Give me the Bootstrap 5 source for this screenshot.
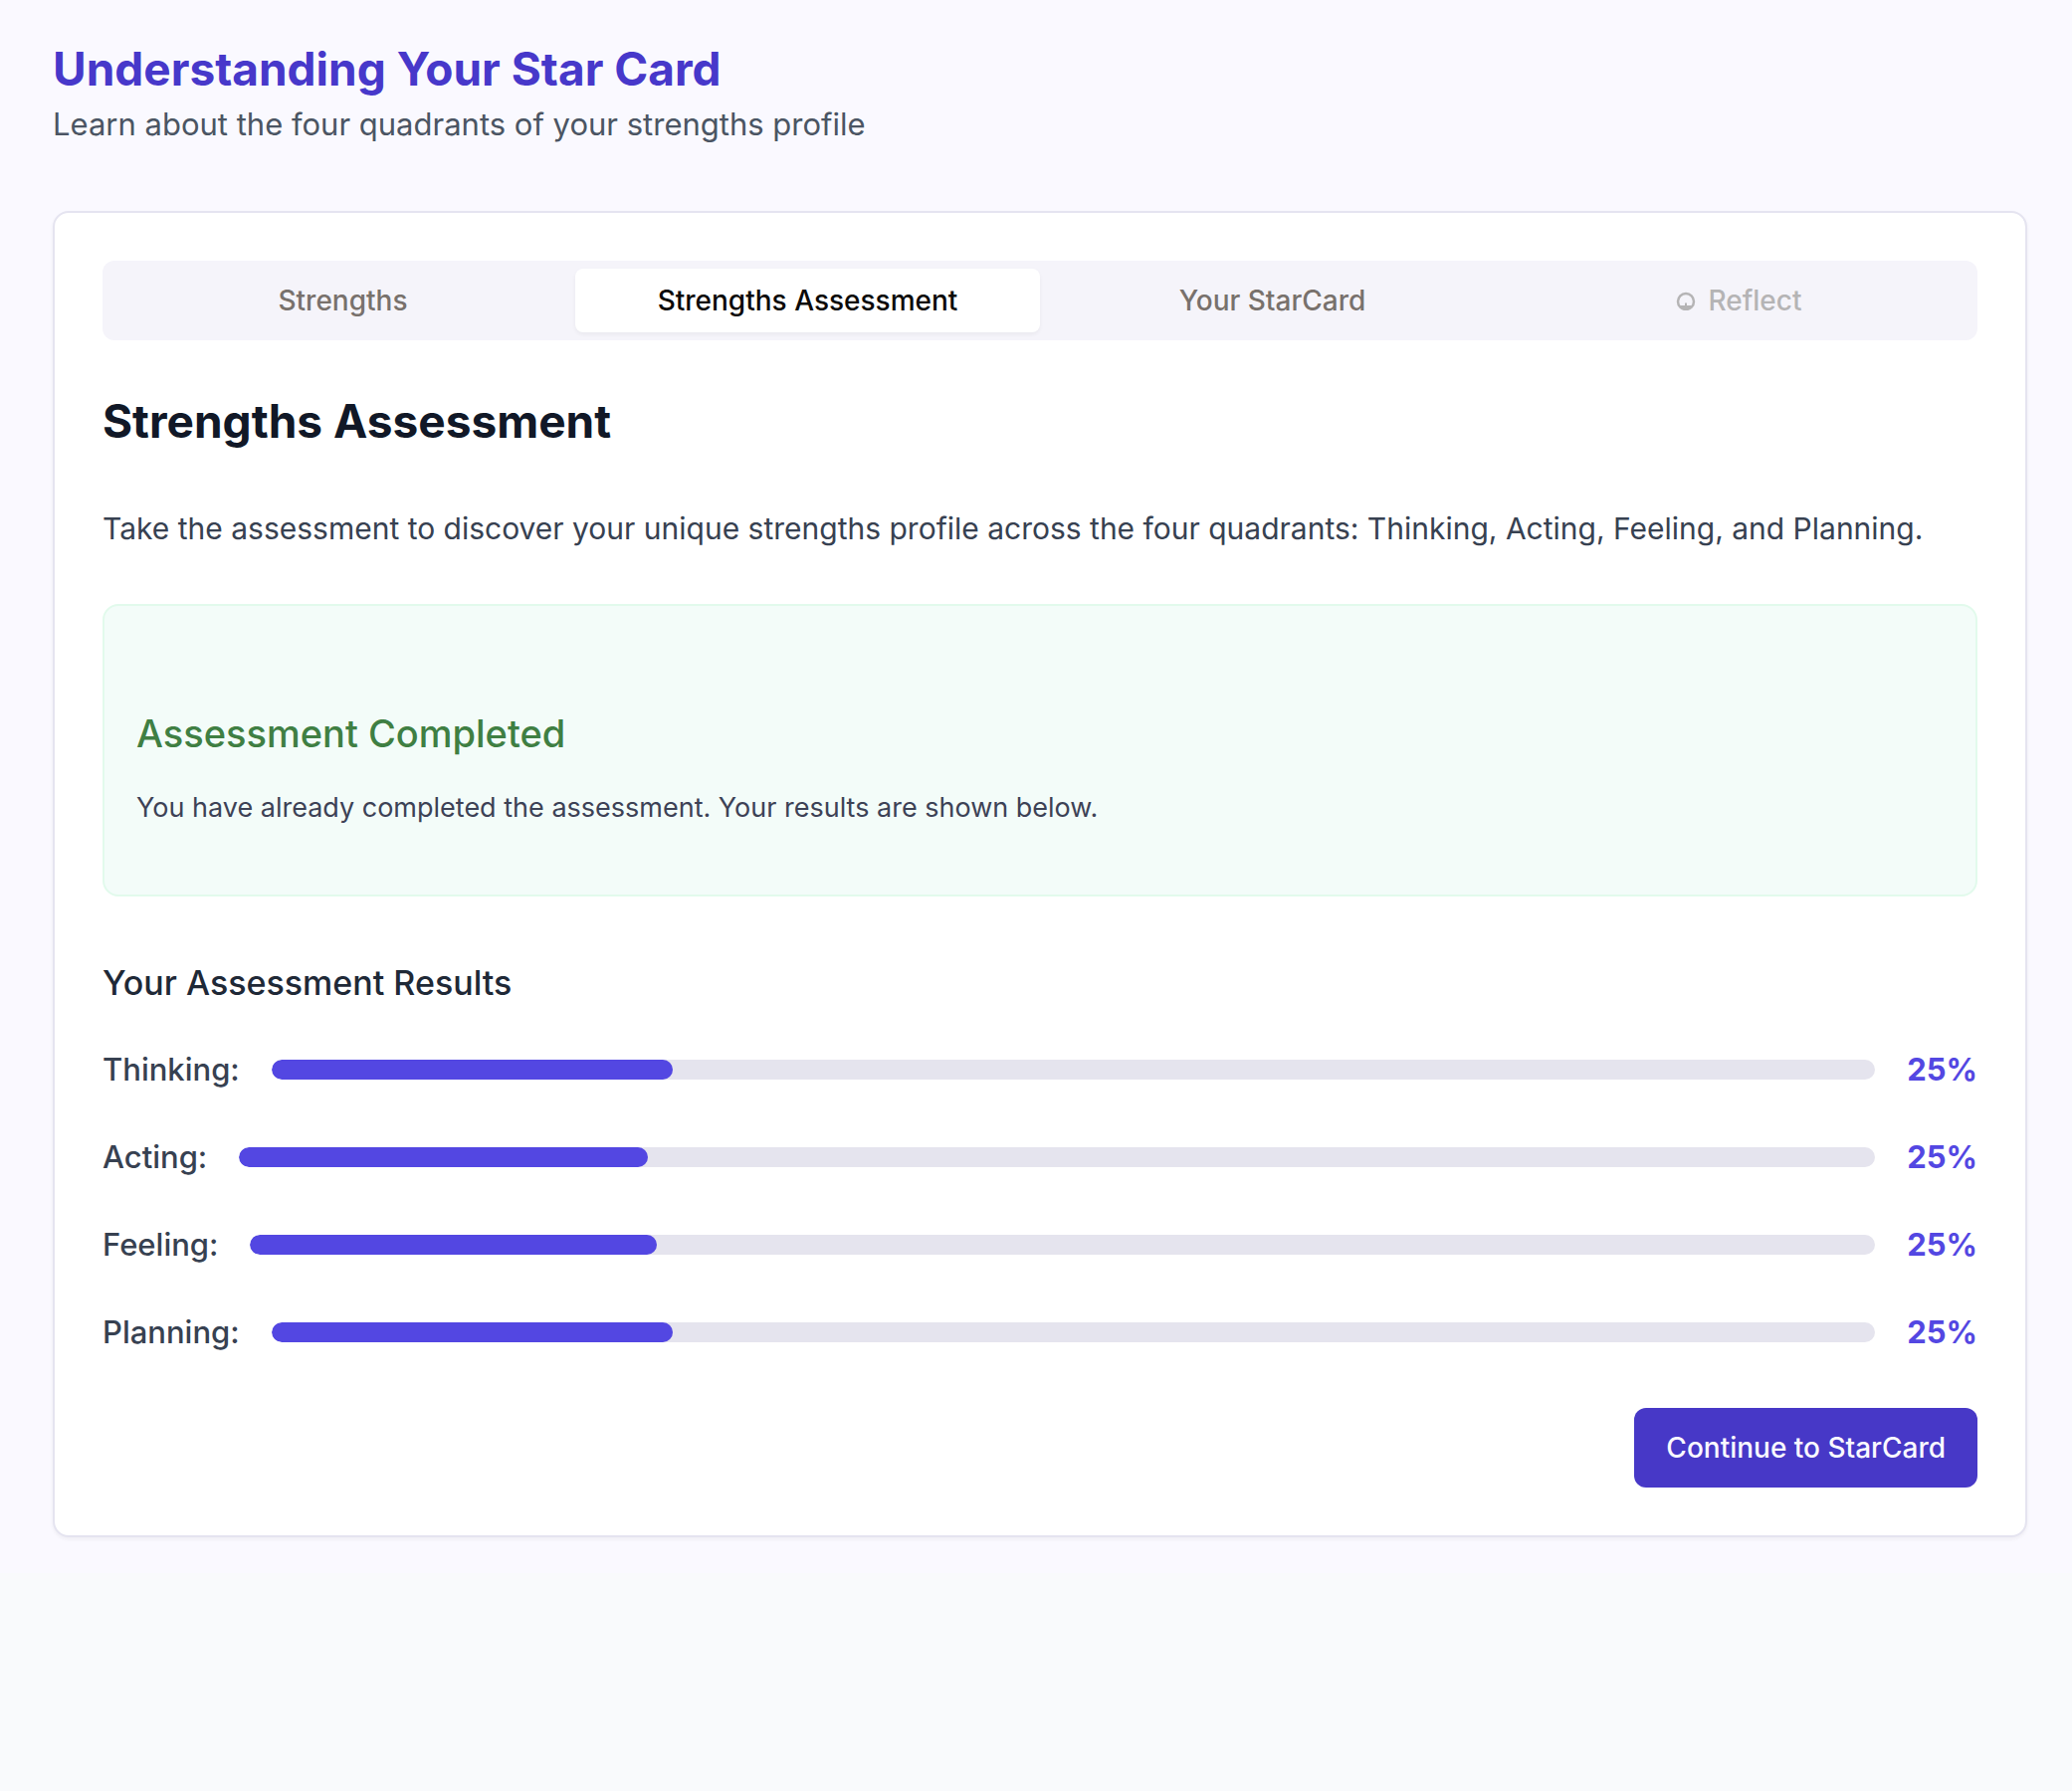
<!DOCTYPE html>
<html lang="en">
<head>
<meta charset="utf-8">
<meta name="viewport" content="width=device-width, initial-scale=1">
<title>Understanding Your Star Card</title>
<link href="https://cdn.jsdelivr.net/npm/bootstrap@5.3.0/dist/css/bootstrap.min.css" rel="stylesheet">
<style>
body{font-family:Inter,"Liberation Sans",sans-serif;font-size:31px;line-height:56px;color:#374151;background:#f9fafc}
.page{background:#faf9ff;padding:40px 45px 36px 53px}
.page-head{margin-bottom:60px}
.page-title{font-size:46px;line-height:58px;font-weight:700;color:#4738ca}
.page-sub{color:#4b5563;line-height:54px}
.panel{border:2px solid #e5e4f0;border-radius:16px;padding:48px;box-shadow:0 2px 4px rgba(0,0,0,.05)}
.tabs{background:#f5f4fa;border-radius:12px;padding:8px}
.tabs .nav-link{font-size:28px;line-height:40px;padding:12px 24px;border:0;background:transparent;font-weight:500;color:#78716c;border-radius:8px}
.tabs .nav-link.active{background:#fff;color:#0c0a09;box-shadow:0 2px 4px rgba(0,0,0,.05)}
.tabs .nav-link:disabled{color:#b5b4b5;gap:12px}
.section-title{font-size:46px;line-height:66px;font-weight:700;color:#111827}
.intro{font-size:30px;line-height:55px}
.done{background:#f3fcf9;border:2px solid #e2faec;border-radius:16px;padding:100px 32px 64px}
.done-title{font-size:38px;line-height:56px;font-weight:500;color:#3f7f43}
.done-text{font-size:27px;line-height:46px;color:#3d4256}
.results-title{font-size:34px;line-height:62px;font-weight:500;color:#1f2937;margin:56px 0 28px}
.scores,.score{gap:32px}
.score{font-weight:500}
.score .progress{height:20px;border-radius:10px;background:#e5e4ee}
.score .progress-bar{border-radius:10px;background:#5347e2}
.score strong{font-weight:700;color:#5347e2}
.btn-go{--bs-btn-color:#faf9ff;--bs-btn-bg:#4738c7;--bs-btn-hover-color:#fff;--bs-btn-hover-bg:#3c2fb0;font-size:28px;line-height:40px;font-weight:500;padding:20px 32px;border:0;border-radius:12px}
</style>
</head>
<body>
<div class="page">
  <header class="page-head">
    <h1 class="page-title mb-0">Understanding Your Star Card</h1>
    <p class="page-sub mb-0">Learn about the four quadrants of your strengths profile</p>
  </header>
  <main class="card panel">
    <div class="nav nav-justified tabs" role="tablist">
      <button class="nav-link" type="button" role="tab" aria-selected="false">Strengths</button>
      <button class="nav-link active" type="button" role="tab" aria-selected="true">Strengths Assessment</button>
      <button class="nav-link" type="button" role="tab" aria-selected="false">Your StarCard</button>
      <button class="nav-link d-flex align-items-center justify-content-center" type="button" role="tab" aria-selected="false" disabled>
        <svg class="ms-1" width="20" height="20" viewBox="0 0 20 20" aria-hidden="true"><circle cx="10" cy="11" r="8" fill="none" stroke="currentColor" stroke-width="2.5"/><path d="M4 15H9v-2.500h2V15h5L14 18H6z" fill="currentColor"/></svg>
        <span>Reflect</span>
      </button>
    </div>
    <h2 class="section-title my-5">Strengths Assessment</h2>
    <p class="intro mb-5">Take the assessment to discover your unique strengths profile across the four quadrants: Thinking, Acting, Feeling, and Planning.</p>
    <section class="done">
      <h3 class="done-title mb-4">Assessment Completed</h3>
      <p class="done-text mb-0">You have already completed the assessment. Your results are shown below.</p>
    </section>
    <h3 class="results-title">Your Assessment Results</h3>
    <div class="scores d-flex flex-column mb-5">
      <div class="score d-flex align-items-center">
        <span id="thinking">Thinking:</span>
        <div class="progress flex-grow-1" role="progressbar" aria-labelledby="thinking" aria-valuenow="25" aria-valuemin="0" aria-valuemax="100"><div class="progress-bar" style="width:25%"></div></div>
        <strong>25%</strong>
      </div>
      <div class="score d-flex align-items-center">
        <span id="acting">Acting:</span>
        <div class="progress flex-grow-1" role="progressbar" aria-labelledby="acting" aria-valuenow="25" aria-valuemin="0" aria-valuemax="100"><div class="progress-bar" style="width:25%"></div></div>
        <strong>25%</strong>
      </div>
      <div class="score d-flex align-items-center">
        <span id="feeling">Feeling:</span>
        <div class="progress flex-grow-1" role="progressbar" aria-labelledby="feeling" aria-valuenow="25" aria-valuemin="0" aria-valuemax="100"><div class="progress-bar" style="width:25%"></div></div>
        <strong>25%</strong>
      </div>
      <div class="score d-flex align-items-center">
        <span id="planning">Planning:</span>
        <div class="progress flex-grow-1" role="progressbar" aria-labelledby="planning" aria-valuenow="25" aria-valuemin="0" aria-valuemax="100"><div class="progress-bar" style="width:25%"></div></div>
        <strong>25%</strong>
      </div>
    </div>
    <div class="d-flex justify-content-end">
      <button class="btn btn-go" type="button">Continue to StarCard</button>
    </div>
  </main>
</div>
<script src="https://cdn.jsdelivr.net/npm/bootstrap@5.3.0/dist/js/bootstrap.bundle.min.js"></script>
</body>
</html>
